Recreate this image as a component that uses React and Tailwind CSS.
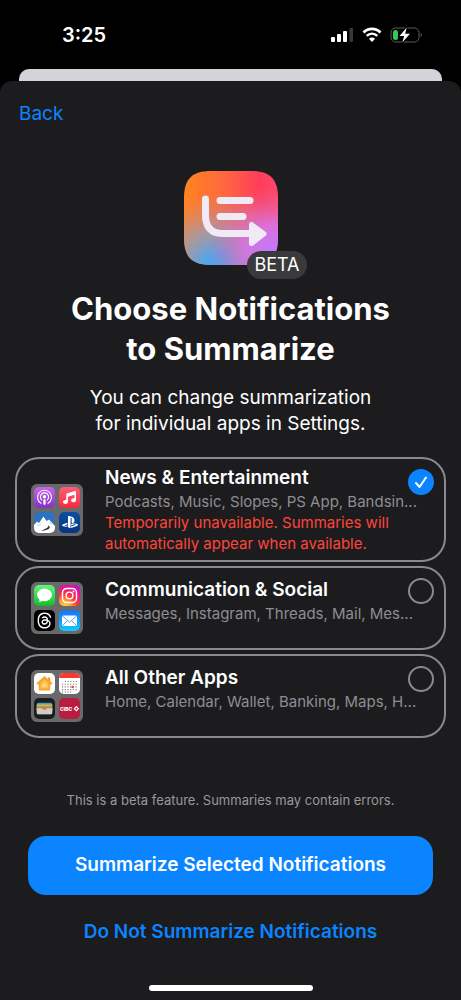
import React, { useState } from 'react';
import { FaPlaystation, FaThreads, FaMusic } from 'react-icons/fa6';

function StatusBar() {
  return (
    <header className="flex h-[69px] items-center justify-between pl-[62px] pr-[38px] text-white">
      <span className="text-[20px] leading-6 font-semibold">3:25</span>
      <div className="flex items-center gap-2">
        <svg width="24" height="16" viewBox="0 0 24 16" aria-hidden="true">
          <rect x="1" y="10" width="4" height="5" rx="1" fill="#fff" />
          <rect x="7" y="7" width="4" height="8" rx="1" fill="#fff" />
          <rect x="13" y="4" width="4" height="11" rx="1" fill="#fff" />
          <rect x="19.500" y="1" width="3.500" height="14" rx="1" fill="#39393b" />
        </svg>
        <svg width="20" height="16" viewBox="0 0 20 16" fill="none" stroke="#fff" aria-hidden="true">
          <path d="M1.500 5.400C6.300.600 13.700.600 18.500 5.400" strokeWidth="2.800" />
          <path d="M4.700 8.900C7.800 6 12.200 6 15.300 8.900" strokeWidth="2.600" />
          <path d="M10 15 6.900 11.800C8.600 10.200 11.400 10.200 13.100 11.800Z" fill="#fff" stroke="none" />
        </svg>
        <svg width="33" height="18" viewBox="0 0 33 18" aria-hidden="true">
          <rect x="1" y="2" width="28" height="14" rx="4.500" fill="none" stroke="#5f5f61" />
          <path d="M30.700 7v4c1.600-.6 1.600-3.400 0-4Z" fill="#5f5f61" />
          <rect x="3" y="4" width="5" height="10" rx="2.500" fill="#34c759" />
          <path d="M16.800 1.500 9.500 10h4.700L12.300 16.500 20 7.800h-4.900Z" fill="#fff" stroke="#000" strokeWidth="2" paintOrder="stroke" />
        </svg>
      </div>
    </header>
  );
}

function SummaryLogo() {
  return (
    <svg width="94" height="94" viewBox="0 0 94 94" aria-hidden="true">
      <defs>
        <linearGradient id="logo-base" x1="0" y1="0" x2="1" y2="0">
          <stop offset="0" stopColor="#ff8420" />
          <stop offset="0.400" stopColor="#ff6a3c" />
          <stop offset="0.800" stopColor="#ff3d5a" />
          <stop offset="1" stopColor="#ff4668" />
        </linearGradient>
        <radialGradient id="logo-violet" cx="0.950" cy="0.850" r="0.700">
          <stop offset="0" stopColor="#c078ff" />
          <stop offset="0.400" stopColor="#d873e4" stopOpacity="0.900" />
          <stop offset="1" stopColor="#f0608c" stopOpacity="0" />
        </radialGradient>
        <radialGradient id="logo-blue" cx="0.380" cy="1.080" r="0.860">
          <stop offset="0" stopColor="#35a8ff" />
          <stop offset="0.250" stopColor="#50a8f0" stopOpacity="0.950" />
          <stop offset="0.550" stopColor="#99a0b8" stopOpacity="0.750" />
          <stop offset="1" stopColor="#e08070" stopOpacity="0" />
        </radialGradient>
        <clipPath id="logo-clip">
          <path d="M27 0H67C86 0 94 8 94 27V67C94 86 86 94 67 94H27C8 94 0 86 0 67V27C0 8 8 0 27 0Z" />
        </clipPath>
      </defs>
      <g clipPath="url(#logo-clip)">
        <rect width="94" height="94" fill="url(#logo-base)" />
        <rect width="94" height="94" fill="url(#logo-blue)" />
        <rect width="94" height="94" fill="url(#logo-violet)" />
      </g>
      <g fill="none" stroke="#f0eaf6" strokeWidth="7" strokeLinecap="round" strokeLinejoin="round">
        <path d="M21.500 28V44C21.500 56 27 62.500 38 62.500H66" />
        <path d="M36 29.500H66M36 45.500H59" />
        <path d="M67.500 53.500V72.500L80 62.800Z" fill="#f0eaf6" strokeWidth="5" />
      </g>
    </svg>
  );
}

const tile = 'flex h-[21px] w-[21px] items-center justify-center overflow-hidden rounded-[5px]';

function Podcasts() {
  return (
    <span className={`${tile} bg-linear-to-b from-[#c965ea] to-[#8431c4]`}>
      <svg width="17" height="17" viewBox="0 0 17 17" fill="none" stroke="#fff" strokeLinecap="round">
        <path d="M5 14.300A7 7 0 1 1 12 14.300" strokeWidth="1.100" />
        <path d="M5.700 11A4.100 4.100 0 1 1 11.300 11" strokeWidth="1.100" />
        <circle cx="8.500" cy="7.700" r="1.700" fill="#fff" stroke="none" />
        <path d="M8.500 11.500v3.300" strokeWidth="2.300" />
      </svg>
    </span>
  );
}

function Music() {
  return (
    <span className={`${tile} bg-linear-to-b from-[#fb5c74] to-[#fa233b] text-white`}>
      <FaMusic size={13} />
    </span>
  );
}

function Slopes() {
  return (
    <span className={`${tile} bg-[#2d72bd]`}>
      <svg width="21" height="21" viewBox="0 0 21 21">
        <path d="M0 13 3 9.500 5 11 9.500 4.500 12.500 9 15 7.500 21 14V21H0Z" fill="#fff" />
        <path d="M3 10.500 5 13 7.500 9.500 6.500 13 4 14.500ZM15 9.500l1 3 2.500-.5Z" fill="#c4ddf5" />
        <path d="M8 12C14 12 17 14 12 16.500L7 19C11 18.500 17 17 15.500 14.500 14.500 12.500 11 12 8 12Z" fill="#1d2b38" />
      </svg>
    </span>
  );
}

function PlayStation() {
  return (
    <span className={`${tile} bg-linear-to-b from-[#0b50a0] to-[#073482] text-white`}>
      <FaPlaystation size={16} />
    </span>
  );
}

function Messages() {
  return (
    <span className={`${tile} bg-linear-to-b from-[#5df777] to-[#0abc29]`}>
      <svg width="17" height="17" viewBox="0 0 17 17" fill="#fff">
        <ellipse cx="8.500" cy="7.900" rx="7.500" ry="6.300" />
        <path d="M4 11c.2 2-.6 3.200-1.600 3.900 2 0 3.600-.700 4.800-1.900Z" />
      </svg>
    </span>
  );
}

function Instagram() {
  return (
    <span className={`${tile} bg-[radial-gradient(circle_at_25%_105%,#ffdc55_0%,#ff9a30_25%,#ff3545_48%,#e5109a_75%,#b012e8_100%)]`}>
      <svg width="17" height="17" viewBox="0 0 17 17" fill="none" stroke="#fff" strokeWidth="1.400">
        <rect x="1.500" y="1.500" width="14" height="14" rx="4" />
        <circle cx="8.500" cy="8.500" r="3.400" />
        <circle cx="12.500" cy="4.500" r="0.900" fill="#fff" stroke="none" />
      </svg>
    </span>
  );
}

function Threads() {
  return (
    <span className={`${tile} bg-black text-white`}>
      <FaThreads size={17} />
    </span>
  );
}

function Mail() {
  return (
    <span className={`${tile} bg-linear-to-b from-[#1d70f2] to-[#1ac8fc]`}>
      <svg width="17" height="17" viewBox="0 0 17 17">
        <rect x="1" y="3.500" width="15" height="10.500" rx="1.500" fill="#fff" />
        <path d="M1.500 4 8.500 10.200 15.500 4M1.500 13.500 6.500 8.700M15.500 13.500 10.500 8.700" fill="none" stroke="#3f9bec" strokeWidth="0.900" />
      </svg>
    </span>
  );
}

function Home() {
  return (
    <span className={`${tile} bg-white`}>
      <svg width="19" height="19" viewBox="0 0 19 19">
        <path d="M13 3.500h2.200V8H13Z" fill="#f59a1c" />
        <path d="M9.500 2 1.500 9.200l1 1.200H3.800V15.500Q3.800 16.500 4.800 16.500H14.200Q15.200 16.500 15.200 15.500V10.400H16.500l1-1.200Z" fill="#faa32b" />
        <path d="M9.500 5.500 5.500 9v5.500h8V9Z" fill="#ffc24f" />
        <path d="M9.500 8.500 7.500 10.200v2.800h4v-2.800Z" fill="#ffda7d" />
      </svg>
    </span>
  );
}

function Calendar() {
  return (
    <span className={`${tile} bg-white`}>
      <svg width="21" height="21" viewBox="0 0 21 21">
        <rect width="21" height="5" fill="#f8392f" />
        <path d="M6 8.500H18M3 11.200H18M3 13.900H18M3 16.600H18M3 19H13" stroke="#77777a" strokeWidth="1.100" strokeDasharray="1.100 1.600" />
        <circle cx="13.600" cy="14" r="1.200" fill="#f8392f" />
      </svg>
    </span>
  );
}

function Wallet() {
  return (
    <span className={`${tile} bg-[#1b1c1e]`}>
      <svg width="17" height="17" viewBox="0 0 17 17">
        <rect x="0.800" y="2.800" width="15.400" height="11.500" rx="1.500" fill="#4f9fac" />
        <rect x="0.800" y="4.500" width="15.400" height="6" fill="#e8b84b" />
        <rect x="0.800" y="6" width="15.400" height="5" fill="#79ad62" />
        <rect x="0.800" y="7.300" width="15.400" height="4" fill="#e27362" />
        <path d="M.8 8.300H5C6.500 8.300 6.500 10 8.500 10S10.500 8.300 12 8.300H16.200V13Q16.200 14.300 15 14.300H2Q.8 14.300.8 13Z" fill="#cfccc0" />
      </svg>
    </span>
  );
}

function Banking() {
  return (
    <span className={`${tile} bg-[#b91d3d]`}>
      <svg width="21" height="21" viewBox="0 0 21 21">
        <text x="1" y="12.500" fill="#fff" fontSize="5" fontWeight="800">CIBC</text>
        <path d="m17.400 8.700 2 2-2 2-2-2Z" fill="none" stroke="#fff" strokeWidth="1.200" />
      </svg>
    </span>
  );
}

const groups = [
  {
    id: 'news',
    title: 'News & Entertainment',
    apps: 'Podcasts, Music, Slopes, PS App, Bandsin...',
    notice: 'Temporarily unavailable. Summaries will automatically appear when available.',
    icons: [Podcasts, Music, Slopes, PlayStation],
  },
  {
    id: 'social',
    title: 'Communication & Social',
    apps: 'Messages, Instagram, Threads, Mail, Mes...',
    icons: [Messages, Instagram, Threads, Mail],
  },
  {
    id: 'other',
    title: 'All Other Apps',
    apps: 'Home, Calendar, Wallet, Banking, Maps, H...',
    icons: [Home, Calendar, Wallet, Banking],
  },
];

function GroupCard({ group, checked, onChange }) {
  return (
    <label
      htmlFor={group.id}
      className="relative flex min-h-[84px] items-center gap-[22px] rounded-3xl border-2 border-[#8a8a8e] py-[6px] pr-7 pl-[14px]"
    >
      <span className="grid shrink-0 grid-cols-2 gap-1 rounded-md bg-[#69696b] p-[3px]" aria-hidden="true">
        {group.icons.map((Icon, i) => (
          <Icon key={i} />
        ))}
      </span>
      <span className={group.notice ? 'min-w-0 flex-1' : 'min-w-0 flex-1 pb-4'}>
        <span className="block text-[19px] leading-[26px] font-semibold text-white">{group.title}</span>
        <span className="block text-[15px] leading-[21px] whitespace-nowrap text-[#8d8d93]">{group.apps}</span>
        {group.notice && <span className="block text-[15px] leading-[21px] text-[#ff453a]">{group.notice}</span>}
      </span>
      <span className="absolute top-[10px] right-[10px] grid h-[26px] w-[26px]">
        <input
          id={group.id}
          type="checkbox"
          checked={checked}
          onChange={onChange}
          className="peer col-start-1 row-start-1 h-full w-full appearance-none rounded-full border-2 border-[#8a8a8e] checked:border-[#0a84ff] checked:bg-[#0a84ff]"
        />
        <svg
          viewBox="0 0 26 26"
          className="pointer-events-none col-start-1 row-start-1 hidden peer-checked:block"
          fill="none"
          stroke="#fff"
          strokeWidth="2"
          strokeLinecap="round"
          strokeLinejoin="round"
        >
          <path d="M8 14 11.500 18 18 8.500" />
        </svg>
      </span>
    </label>
  );
}

export default function App() {
  const [selected, setSelected] = useState(['news']);

  const toggle = (id) => {
    setSelected((prev) => (prev.includes(id) ? prev.filter((x) => x !== id) : [...prev, id]));
  };

  return (
    <div className="flex min-h-screen flex-col bg-black font-['Inter','Liberation_Sans',sans-serif]">
      <StatusBar />
      <div className="mx-[19px] h-3 rounded-t-[10px] bg-[#d4d3d9]" />
      <main className="flex flex-1 flex-col rounded-t-xl bg-[#1c1c1e]">
        <nav className="flex px-[19px] pt-5">
          <button type="button" className="text-[19px] leading-[26px] text-[#0a84ff]">
            Back
          </button>
        </nav>

        <section className="flex flex-col items-center px-4 pt-11 text-center text-white">
          <div className="relative">
            <SummaryLogo />
            <span className="absolute -right-[29px] -bottom-[14px] rounded-full bg-[#3a3a3c] px-[7px] text-[18px] leading-7">
              BETA
            </span>
          </div>
          <h1 className="mt-6 text-[31px] leading-10 font-bold">
            Choose Notifications
            <br />
            to Summarize
          </h1>
          <p className="mt-4 text-[19px] leading-[26px]">
            You can change summarization
            <br />
            for individual apps in Settings.
          </p>
        </section>

        <form className="mt-5 flex flex-col gap-1 px-[15px]">
          {groups.map((group) => (
            <GroupCard
              key={group.id}
              group={group}
              checked={selected.includes(group.id)}
              onChange={() => toggle(group.id)}
            />
          ))}
        </form>

        <footer className="mt-auto flex flex-col items-center px-7 pt-8 pb-[9px]">
          <p className="text-[13px] leading-4 text-[#98989d]">This is a beta feature. Summaries may contain errors.</p>
          <button
            type="button"
            className="mt-7 h-[59px] w-full rounded-[18px] bg-[#0a84ff] text-[19px] font-semibold text-white"
          >
            Summarize Selected Notifications
          </button>
          <button type="button" className="mt-6 text-[19px] leading-[26px] font-semibold text-[#0a84ff]">
            Do Not Summarize Notifications
          </button>
          <div className="mt-10 h-[6px] w-[164px] rounded-full bg-white" />
        </footer>
      </main>
    </div>
  );
}
